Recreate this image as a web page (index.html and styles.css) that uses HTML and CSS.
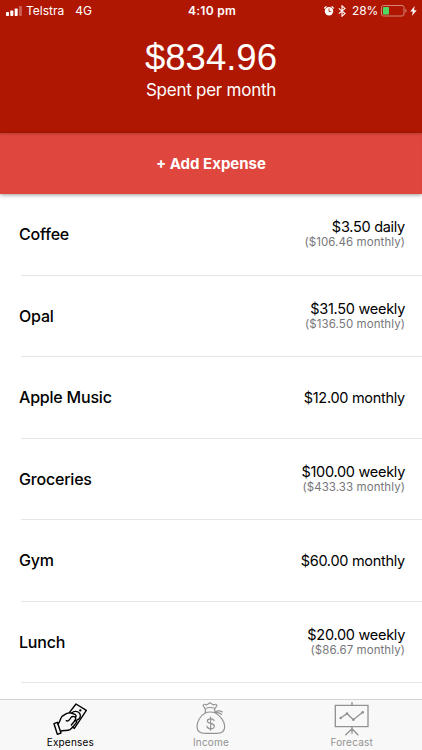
FILE: index.html
```html
<!DOCTYPE html>
<html lang="en">
<head>
    <meta charset="UTF-8">
    <meta name="viewport" content="width=device-width, initial-scale=1.0">
    <title>Expenses</title>
    <link rel="stylesheet" href="styles.css">
</head>
<body>
    <header class="header">
        <div class="status-bar">
            <div class="status-left">
                <svg class="signal" width="17" height="10" viewBox="0 0 17 10" fill="#fff">
                    <rect x="0" y="6" width="3" height="4" rx="0.7"/>
                    <rect x="4.3" y="4.5" width="3" height="5.5" rx="0.7"/>
                    <rect x="8.7" y="2.5" width="3" height="7.5" rx="0.7"/>
                    <rect x="13" y="0" width="3" height="10" rx="0.7" opacity="0.3"/>
                </svg>
                <span class="carrier">Telstra</span>
                <span class="network">4G</span>
            </div>
            <div class="time">4:10 pm</div>
            <div class="status-right">
                <svg width="12" height="12" viewBox="0 0 12 12" fill="none" stroke="#fff" stroke-linecap="round">
                    <circle cx="6" cy="6.2" r="4.2" fill="#fff" stroke="none"/>
                    <path d="M1.7 3 3 1.8M10.3 3 9 1.8" stroke-width="1.3"/>
                    <path d="M6 3.8V6.4H8" stroke="#b01703" stroke-width="0.8"/>
                </svg>
                <svg class="bluetooth" width="8" height="12" viewBox="0 0 8 12" fill="none" stroke="#fff" stroke-width="1.1">
                    <path d="M.8 3.4 7 8.6 4 11.2V.8l3 2.6L.8 8.6"/>
                </svg>
                <span class="percent">28%</span>
                <svg class="battery" width="26" height="12" viewBox="0 0 26 12">
                    <rect x="0.5" y="0.5" width="22.5" height="10.5" rx="2" fill="none" stroke="#d5847b"/>
                    <rect x="2" y="2" width="6" height="7.5" rx="0.6" fill="#4cd964"/>
                    <path d="M24.3 3.8q1.3.4 1.3 2t-1.3 2z" fill="#d5847b"/>
                </svg>
                <svg width="7" height="10" viewBox="0 0 7 10" fill="#fff">
                    <path d="M4.7 0 .3 5.5h2.6L1.9 10 6.7 4.2H4z"/>
                </svg>
            </div>
        </div>
        <div class="total">$834.96</div>
        <div class="subtitle">Spent per month</div>
    </header>

    <button class="add-button"><span>+ Add Expense</span></button>

    <ul class="expense-list">
        <li class="expense">
            <span class="name">Coffee</span>
            <div class="cost">
                <div class="amount">$3.50 daily</div>
                <div class="monthly">($106.46 monthly)</div>
            </div>
        </li>
        <li class="expense">
            <span class="name">Opal</span>
            <div class="cost">
                <div class="amount">$31.50 weekly</div>
                <div class="monthly">($136.50 monthly)</div>
            </div>
        </li>
        <li class="expense">
            <span class="name">Apple Music</span>
            <div class="cost">
                <div class="amount">$12.00 monthly</div>
            </div>
        </li>
        <li class="expense">
            <span class="name">Groceries</span>
            <div class="cost">
                <div class="amount">$100.00 weekly</div>
                <div class="monthly">($433.33 monthly)</div>
            </div>
        </li>
        <li class="expense">
            <span class="name">Gym</span>
            <div class="cost">
                <div class="amount">$60.00 monthly</div>
            </div>
        </li>
        <li class="expense">
            <span class="name">Lunch</span>
            <div class="cost">
                <div class="amount">$20.00 weekly</div>
                <div class="monthly">($86.67 monthly)</div>
            </div>
        </li>
    </ul>

    <nav class="tab-bar">
        <a class="tab active">
            <svg width="36" height="36" viewBox="37 33 108 108" fill="none" stroke="currentColor" stroke-width="4.2" stroke-linejoin="round" stroke-linecap="round">
                <path d="M43 101 53 97 64 129 53 133Z"/>
                <path d="M55 102C61 98 61 86 67 79L80 71Q86 68 94 69L106 73C112 77 109 83 103 80Q96 78 93 84C90 90 84 95 80 92"/>
                <path d="M63 123C72 119 82 124 91 119C99 114 104 106 110 98C113 93 109 89 105 93L95 105"/>
                <path d="M105 93Q109 87 108 82"/>
                <path d="M89 68 109 42 140 61 104 115 98 111"/>
                <path d="M97 68C103 62 115 63 120 70C125 78 121 87 112 90"/>
                <circle cx="122" cy="61" r="1.5" fill="currentColor"/>
            </svg>
            <span>Expenses</span>
        </a>
        <a class="tab">
            <svg width="36" height="36" viewBox="39 33 108 108" fill="none" stroke="currentColor" stroke-width="3.4" stroke-linejoin="round" stroke-linecap="round">
                <path d="M77 60 69 46Q73 40 79 45Q84 42 90 38Q96 42 101 45Q107 40 111 46L103 60"/>
                <path d="M78 55Q90 50 103 55M76 68Q91 64 106 68"/>
                <path d="M76 60V69C62 76 51 94 51 110C51 124 61 130 76 130H110C125 130 134 122 134 110C134 94 121 77 106 69L104 60"/>
                <path d="M105 66Q117 59 127 66M107 68Q119 67 125 73"/>
                <path d="M102 92C100 85 82 84 82 93C82 103 103 97 103 109C103 119 82 118 81 109M92 81V121"/>
            </svg>
            <span>Income</span>
        </a>
        <a class="tab">
            <svg width="36" height="36" viewBox="41 33 108 108" fill="none" stroke="currentColor" stroke-width="4">
                <path d="M95 36V46M45 46H143V110H45ZM95 110V131M75 136 95 116 114 136"/>
                <path d="M61 84 80 71 99 89 127 67"/>
                <g fill="currentColor" stroke="none">
                    <circle cx="61" cy="84" r="4"/>
                    <circle cx="80" cy="71" r="4"/>
                    <circle cx="99" cy="89" r="4"/>
                    <circle cx="127" cy="67" r="4"/>
                </g>
            </svg>
            <span>Forecast</span>
        </a>
    </nav>
</body>
</html>
```
FILE: styles.css
```css
* {
    box-sizing: border-box;
}

body {
    font-family: Inter, "Liberation Sans", sans-serif;
    background-color: #fff;
    color: #000;
    display: flex;
    flex-direction: column;
    height: 750px;
    margin: 0;
    overflow: hidden;
}

.header {
    flex: none;
    height: 133px;
    background-color: #b01703;
    color: #fff;
    text-align: center;
}

.status-bar {
    display: grid;
    grid-template-columns: 1fr auto 1fr;
    align-items: center;
    height: 22px;
    padding: 0 5px 0 6px;
    font-size: 12px;
    line-height: 22px;
}

.status-left, .status-right {
    display: flex;
    align-items: center;
}

.status-right {
    justify-content: flex-end;
}

.carrier {
    margin-left: 3px;
}

.network {
    margin-left: 11px;
}

.time {
    padding-left: 1px;
    font-weight: 600;
    letter-spacing: 0.3px;
}

.bluetooth {
    margin-left: 3px;
}

.percent {
    margin-left: 6px;
    letter-spacing: -0.2px;
}

.battery {
    margin: 0 3px;
}

.total {
    margin-top: 14px;
    font-family: "Liberation Sans", Arial, sans-serif;
    font-size: 36.5px;
    line-height: 44px;
}

.subtitle {
    margin-top: -1px;
    font-size: 17px;
    line-height: 22px;
    letter-spacing: -0.25px;
}

.add-button {
    flex: none;
    height: 60.5px;
    padding: 0;
    border: none;
    background-color: #df463e;
    box-shadow: 0 1px 4px rgba(0, 0, 0, 0.4), inset 0 3px 3px -2px rgba(0, 0, 0, 0.2);
    color: #fff;
    font-family: inherit;
    font-size: 15px;
    font-weight: 700;
}

.expense-list {
    flex: 1;
    margin: 0;
    padding: 0.5px 0 0 21px;
    list-style: none;
    overflow: hidden;
}

.expense {
    display: flex;
    justify-content: space-between;
    align-items: center;
    height: 81.5px;
    padding-right: 17px;
    border-bottom: 1px solid #e6e6e8;
}

.name {
    margin-left: -2px;
    font-size: 16px;
    font-weight: 500;
    letter-spacing: -0.2px;
}

.cost {
    text-align: right;
}

.amount {
    font-size: 14.5px;
    line-height: 17px;
    letter-spacing: -0.28px;
}

.monthly {
    color: #77777a;
    font-size: 11.5px;
    line-height: 15px;
    letter-spacing: 0.08px;
}

.tab-bar {
    flex: none;
    display: flex;
    height: 51px;
    border-top: 1px solid #d4d4d6;
    background-color: #f8f8f8;
}

.tab {
    flex: 1;
    display: flex;
    flex-direction: column;
    align-items: center;
    padding-top: 1px;
    color: #929292;
    font-size: 10px;
    line-height: 11px;
    letter-spacing: 0.2px;
}

.tab.active {
    color: #000;
}
```
